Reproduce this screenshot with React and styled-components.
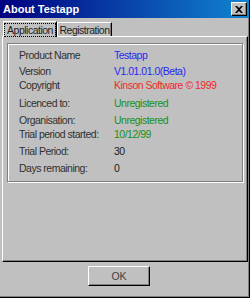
import React from 'react';
import styled, { createGlobalStyle } from 'styled-components';

const Global = createGlobalStyle`
  html, body {
    margin: 0;
    padding: 0;
    background: #c0c0c0;
  }
`;

const Window = styled.div`
  width: 250px;
  height: 298px;
  box-sizing: border-box;
  background: #c0c0c0;
  border-right: 1px solid #000;
  border-bottom: 1px solid #000;
  box-shadow: inset -1px -1px 0 #808080;
  display: flex;
  flex-direction: column;
  font-family: "Liberation Sans", Arial, sans-serif;
  font-size: 10.5px;
  letter-spacing: -0.5px;
  overflow: hidden;
`;

const TitleBar = styled.div`
  height: 18px;
  display: flex;
  align-items: center;
  justify-content: space-between;
  background: linear-gradient(90deg, #000080 0%, #1084d0 100%);
  padding: 0 2px 0 3px;
`;

const Title = styled.span`
  color: #fff;
  font-weight: bold;
  font-size: 11px;
  letter-spacing: 0;
`;

const CloseButton = styled.div`
  width: 16px;
  height: 14px;
  box-sizing: border-box;
  background: #c0c0c0;
  border-top: 1px solid #fff;
  border-left: 1px solid #fff;
  border-right: 1px solid #000;
  border-bottom: 1px solid #000;
  box-shadow: inset -1px -1px 0 #808080;
  display: flex;
  align-items: center;
  justify-content: center;
`;

const Tabs = styled.div`
  display: flex;
  align-items: flex-end;
  height: 16px;
  margin-top: 2px;
  padding-left: 3px;
`;

const Tab = styled.div`
  width: ${p => p.$width}px;
  height: ${p => (p.$active ? 16 : 14)}px;
  box-sizing: border-box;
  border-top: 1px solid #fff;
  border-left: 1px solid #fff;
  border-right: 1px solid #000;
  box-shadow: inset -1px 0 0 #808080;
  display: flex;
  align-items: center;
  justify-content: center;
  color: #202020;
  position: relative;
  z-index: ${p => (p.$active ? 1 : 0)};
  background: #c0c0c0;
  margin-bottom: ${p => (p.$active ? -1 : 0)}px;
`;

const Focus = styled.span`
  outline: 1px dotted #000;
  padding: 0 2px;
  line-height: 12px;
`;

const Panel = styled.div`
  margin: 0 0 0 2px;
  width: 246px;
  height: 226px;
  box-sizing: border-box;
  border-top: 1px solid #fff;
  border-left: 1px solid #fff;
  border-right: 1px solid #000;
  border-bottom: 1px solid #000;
  box-shadow: inset -1px -1px 0 #808080;
  padding: 6px 4px 0 4px;
`;

const Group = styled.div`
  height: 139px;
  box-sizing: border-box;
  border: 1px solid #808080;
  box-shadow: 1px 1px 0 #fff, inset 1px 1px 0 #fff;
  padding: 4px 0 0 11px;
`;

const Row = styled.div`
  display: flex;
  height: 14px;
  line-height: 14px;
  margin-top: ${p => p.$space}px;
`;

const Label = styled.span`
  width: 95px;
  color: #303030;
`;

const Value = styled.span`
  color: ${p => p.$color};
`;

const Footer = styled.div`
  flex: 1;
  padding: 4px 0 0 88px;
`;

const OkButton = styled.button`
  width: 62px;
  height: 20px;
  box-sizing: border-box;
  background: #c0c0c0;
  border: none;
  border-top: 1px solid #fff;
  border-left: 1px solid #fff;
  border-right: 1px solid #000;
  border-bottom: 1px solid #000;
  box-shadow: inset -1px -1px 0 #808080;
  font-family: "Liberation Sans", Arial, sans-serif;
  font-size: 10.5px;
  color: #404040;
  padding: 0;
`;

const BLUE = '#2828f0';
const RED = '#f02828';
const GREEN = '#189018';
const BLACK = '#202020';

const rows = [
  { label: 'Product Name', value: 'Testapp', color: BLUE, space: 0 },
  { label: 'Version', value: 'V1.01.01.0(Beta)', color: BLUE, space: 2 },
  { label: 'Copyright', value: 'Kinson Software \u00a9 1999', color: RED, space: 0 },
  { label: 'Licenced to:', value: 'Unregistered', color: GREEN, space: 4 },
  { label: 'Organisation:', value: 'Unregistered', color: GREEN, space: 3 },
  { label: 'Trial period started:', value: '10/12/99', color: GREEN, space: 0 },
  { label: 'Trial Period:', value: '30', color: BLACK, space: 3 },
  { label: 'Days remaining:', value: '0', color: BLACK, space: 3 },
];

export default function App() {
  return (
    <>
      <Global />
      <Window>
        <TitleBar>
          <Title>About Testapp</Title>
          <CloseButton>
            <svg width="8" height="7" viewBox="0 0 8 7">
              <path d="M0 0h2l2 2 2-2h2L5 3.5 8 7H6L4 5 2 7H0l3-3.5z" fill="#000" />
            </svg>
          </CloseButton>
        </TitleBar>
        <Tabs>
          <Tab $active $width={54}><Focus>Application</Focus></Tab>
          <Tab $width={55}>Registration</Tab>
        </Tabs>
        <Panel>
          <Group>
            {rows.map(r => (
              <Row key={r.label} $space={r.space}>
                <Label>{r.label}</Label>
                <Value $color={r.color}>{r.value}</Value>
              </Row>
            ))}
          </Group>
        </Panel>
        <Footer>
          <OkButton>OK</OkButton>
        </Footer>
      </Window>
    </>
  );
}
